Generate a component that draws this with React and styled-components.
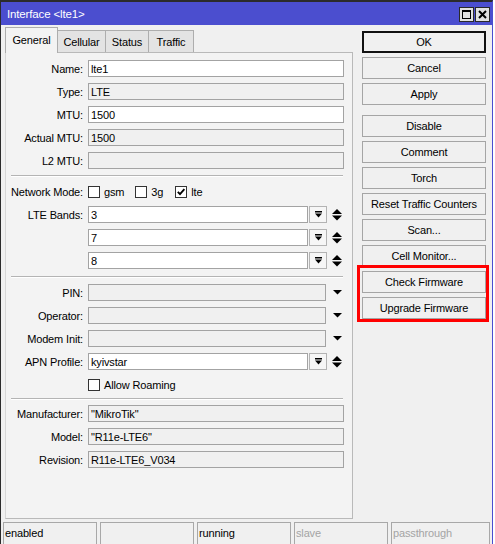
import React from 'react'
import styled, { createGlobalStyle } from 'styled-components'

const GlobalStyle = createGlobalStyle`
  html, body {
    margin: 0;
    padding: 0;
    background: #fff;
  }
  body {
    font-family: "Liberation Sans", Arial, sans-serif;
    font-size: 11px;
    letter-spacing: -0.15px;
    color: #000;
  }
  * { box-sizing: border-box; }
`

const Window = styled.div`
  position: relative;
  width: 493px;
  height: 544px;
  display: flex;
  flex-direction: column;
  background: #f0f0f0;
  border-top: 2px solid #2b2b2b;
  border-left: 1px solid #2b2b2b;
  border-right: 1px solid #4b4ecf;
`

const TitleBar = styled.div`
  height: 23px;
  flex-shrink: 0;
  display: flex;
  align-items: center;
  padding: 1px 2px 0 6px;
  background: #4b4ecf;
  color: #fff;
  font-size: 11.5px;
`

const Title = styled.div`
  flex: 1;
`

const TitleButton = styled.div`
  width: 15px;
  height: 15px;
  margin-left: 1px;
  display: flex;
  align-items: center;
  justify-content: center;
  background: #e1e1e1;
  border: 1px solid #2a2a2a;
`

const Body = styled.div`
  flex: 1;
  display: flex;
  align-items: flex-start;
  padding: 2px 0 0 4px;
`

const LeftColumn = styled.div`
  width: 348px;
  display: flex;
  flex-direction: column;
`

const Tabs = styled.div`
  height: 25px;
  display: flex;
  align-items: flex-end;
`

const Tab = styled.div`
  position: relative;
  z-index: ${p => (p.$active ? 1 : 0)};
  width: ${p => p.$width}px;
  height: ${p => (p.$active ? 26 : 22)}px;
  margin-bottom: ${p => (p.$active ? -1 : 0)}px;
  display: flex;
  align-items: center;
  justify-content: center;
  padding-bottom: ${p => (p.$active ? 2 : 0)}px;
  background: ${p => (p.$active ? '#f3f3f3' : '#e3e3e3')};
  border: 1px solid #adadad;
  border-bottom: none;
  border-left: ${p => (p.$first ? '1px solid #adadad' : 'none')};
`

const Panel = styled.div`
  height: 467px;
  display: flex;
  flex-direction: column;
  gap: 6px;
  padding-top: 7px;
  background: #f3f3f3;
  border: 1px solid #b9b9b9;
  border-left-color: #d6d6d6;
`

const Row = styled.div`
  height: 17px;
  display: flex;
  align-items: center;
`

const Label = styled.div`
  width: 77px;
  margin-right: 5px;
  text-align: right;
  white-space: nowrap;
`

const Field = styled.div`
  width: ${p => p.$width}px;
  height: 17px;
  display: flex;
  align-items: center;
  padding: 0 2px;
  background: ${p => (p.$readOnly ? '#f0f0f0' : '#fff')};
  border: 1px solid #a3a3a3;
  white-space: nowrap;
`

const DropButton = styled.div`
  width: 18px;
  height: 17px;
  margin-left: 1px;
  display: flex;
  align-items: center;
  justify-content: center;
  background: #f6f6f6;
  border: 1px solid #b3b3b3;
`

const SideIcon = styled.svg`
  margin-left: ${p => p.$offset}px;
  display: block;
`

const Separator = styled.div`
  width: 332px;
  height: 2px;
  margin: ${p => p.$top || 0}px 0 ${p => p.$bottom || 0}px 5px;
  border-top: 1px solid #b4b4b4;
  border-bottom: 1px solid #fff;
`

const CheckGroup = styled.div`
  display: flex;
  align-items: center;
  margin-right: ${p => p.$gap || 0}px;
`

const Box = styled.div`
  width: 12px;
  height: 12px;
  margin-right: 4px;
  display: flex;
  align-items: center;
  justify-content: center;
  background: #fff;
  border: 1px solid #333;
`

const RightColumn = styled.div`
  width: 124px;
  margin-left: 9px;
  padding-top: 4px;
  display: flex;
  flex-direction: column;
  gap: 4px;
`

const Button = styled.div`
  height: 22px;
  margin-top: ${p => p.$space || 0}px;
  display: flex;
  align-items: center;
  justify-content: center;
  background: #f0f0f0;
  border: 1px solid ${p => (p.$primary ? '#111' : '#a5a5a5')};
  box-shadow: ${p => (p.$primary ? 'inset 0 0 0 1px #111' : 'none')};
  white-space: nowrap;
`

const StatusBar = styled.div`
  height: 22px;
  flex-shrink: 0;
  display: flex;
  gap: 3px;
  padding: 0 2px;
`

const StatusCell = styled.div`
  width: ${p => (p.$grow ? 'auto' : '94px')};
  flex: ${p => (p.$grow ? 1 : 'none')};
  display: flex;
  align-items: center;
  padding: 0 0 1px 1px;
  color: ${p => (p.$muted ? '#a4a4a4' : '#000')};
  border: 1px solid #a8a8a8;
  border-bottom: none;
`

const Highlight = styled.div`
  position: absolute;
  left: 356px;
  top: 263px;
  width: 132px;
  height: 57px;
  border: 3px solid #f00;
  pointer-events: none;
`

const DropIcon = () => (
  <svg width='7' height='7' viewBox='0 0 7 7'>
    <rect x='0' y='0' width='7' height='1.5' fill='#000' />
    <path d='M0 2.5h7L3.5 6.5z' fill='#000' />
  </svg>
)

const Spinner = () => (
  <SideIcon $offset={5} width='10' height='12' viewBox='0 0 10 12'>
    <path d='M5 0L10 5H0z' fill='#000' />
    <path d='M0 6.5h10L5 11.5z' fill='#000' />
  </SideIcon>
)

const DownArrow = () => (
  <SideIcon $offset={7} width='9' height='5' viewBox='0 0 9 5'>
    <path d='M0 0h9L4.5 4.5z' fill='#000' />
  </SideIcon>
)

const Check = ({ checked, label, gap }) => (
  <CheckGroup $gap={gap}>
    <Box>
      {checked && (
        <svg width='10' height='10' viewBox='0 0 10 10'>
          <path d='M1.8 4.8L4 7.2L8.4 2.2' fill='none' stroke='#000' strokeWidth='1.8' />
        </svg>
      )}
    </Box>
    {label}
  </CheckGroup>
)

const TextRow = ({ label, value, readOnly }) => (
  <Row>
    <Label>{label}</Label>
    <Field $width={256} $readOnly={readOnly}>{value}</Field>
  </Row>
)

const ComboRow = ({ label, value }) => (
  <Row>
    <Label>{label}</Label>
    <Field $width={220}>{value}</Field>
    <DropButton><DropIcon /></DropButton>
    <Spinner />
  </Row>
)

const ReadOnlyCombo = ({ label }) => (
  <Row>
    <Label>{label}</Label>
    <Field $width={238} $readOnly />
    <DownArrow />
  </Row>
)

const tabs = [
  { name: 'General', width: 53 },
  { name: 'Cellular', width: 48 },
  { name: 'Status', width: 43 },
  { name: 'Traffic', width: 45 }
]

const buttons = [
  { name: 'OK', primary: true },
  { name: 'Cancel' },
  { name: 'Apply' },
  { name: 'Disable', space: 6 },
  { name: 'Comment' },
  { name: 'Torch' },
  { name: 'Reset Traffic Counters' },
  { name: 'Scan...' },
  { name: 'Cell Monitor...' },
  { name: 'Check Firmware' },
  { name: 'Upgrade Firmware' }
]

const statuses = [
  { text: 'enabled' },
  { text: '' },
  { text: 'running' },
  { text: 'slave', muted: true },
  { text: 'passthrough', muted: true, grow: true }
]

const App = () => {
  return (
    <React.Fragment>
      <GlobalStyle />
      <Window>
        <TitleBar>
          <Title>Interface &lt;lte1&gt;</Title>
          <TitleButton>
            <svg width='9' height='9' viewBox='0 0 9 9'>
              <rect x='0.5' y='0.5' width='8' height='8' fill='none' stroke='#000' />
              <rect x='0' y='0' width='9' height='2' fill='#000' />
            </svg>
          </TitleButton>
          <TitleButton>
            <svg width='9' height='9' viewBox='0 0 9 9'>
              <path d='M1 1L8 8M8 1L1 8' stroke='#000' strokeWidth='2' />
            </svg>
          </TitleButton>
        </TitleBar>
        <Body>
          <LeftColumn>
            <Tabs>
              {tabs.map((tab, i) => (
                <Tab key={tab.name} $width={tab.width} $active={i === 0} $first={i === 0}>
                  {tab.name}
                </Tab>
              ))}
            </Tabs>
            <Panel>
              <TextRow label='Name:' value='lte1' />
              <TextRow label='Type:' value='LTE' readOnly />
              <TextRow label='MTU:' value='1500' />
              <TextRow label='Actual MTU:' value='1500' readOnly />
              <TextRow label='L2 MTU:' value='' readOnly />
              <Separator />
              <Row>
                <Label>Network Mode:</Label>
                <Check label='gsm' gap={11} />
                <Check label='3g' gap={12} />
                <Check label='lte' checked />
              </Row>
              <ComboRow label='LTE Bands:' value='3' />
              <ComboRow label='' value='7' />
              <ComboRow label='' value='8' />
              <Separator $top={1} />
              <ReadOnlyCombo label='PIN:' />
              <ReadOnlyCombo label='Operator:' />
              <ReadOnlyCombo label='Modem Init:' />
              <ComboRow label='APN Profile:' value='kyivstar' />
              <Row>
                <Label />
                <Check label='Allow Roaming' />
              </Row>
              <Separator $top={-1} $bottom={-1} />
              <TextRow label='Manufacturer:' value='"MikroTik"' readOnly />
              <TextRow label='Model:' value='"R11e-LTE6"' readOnly />
              <TextRow label='Revision:' value='R11e-LTE6_V034' readOnly />
            </Panel>
          </LeftColumn>
          <RightColumn>
            {buttons.map(button => (
              <Button key={button.name} $primary={button.primary} $space={button.space}>
                {button.name}
              </Button>
            ))}
          </RightColumn>
        </Body>
        <StatusBar>
          {statuses.map((status, i) => (
            <StatusCell key={i} $muted={status.muted} $grow={status.grow}>
              {status.text}
            </StatusCell>
          ))}
        </StatusBar>
        <Highlight />
      </Window>
    </React.Fragment>
  )
}

export default App
